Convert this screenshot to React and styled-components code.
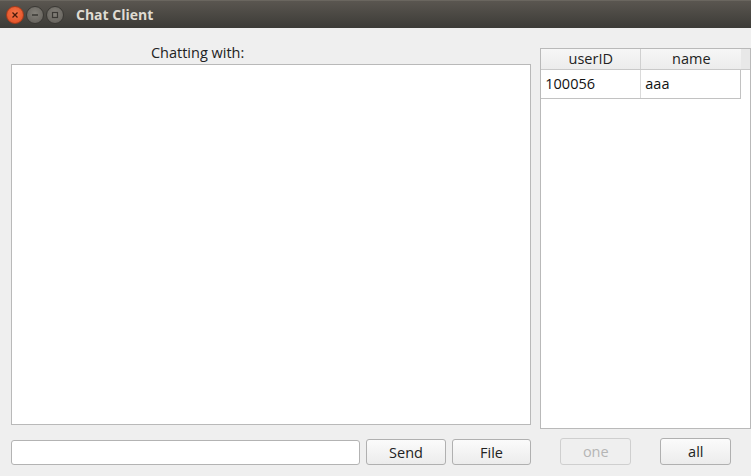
import styled, { createGlobalStyle } from "styled-components";

const Global = createGlobalStyle`
  html, body {
    margin: 0;
    padding: 0;
    background: #efefef;
  }
  * {
    box-sizing: border-box;
  }
`;

const Window = styled.div`
  width: 751px;
  height: 476px;
  display: flex;
  flex-direction: column;
  background: #efefef;
  font-family: "Open Sans", "DejaVu Sans", sans-serif;
  font-size: 14.5px;
  color: #2e2e2e;
  overflow: hidden;
`;

const TitleBar = styled.div`
  height: 28px;
  flex: none;
  display: flex;
  align-items: center;
  padding-left: 6px;
  background: linear-gradient(#5a5650, #3c3b37);
  border-top: 1px solid #6a665f;
`;

const WinButton = styled.div`
  width: 18px;
  height: 18px;
  margin-right: 2px;
  border-radius: 50%;
  display: flex;
  align-items: center;
  justify-content: center;
  background: ${(p) =>
    p.close
      ? "radial-gradient(circle at 50% 40%, #f4764a, #e0491f)"
      : "radial-gradient(circle at 50% 40%, #838079, #5f5c57)"};
  border: 1px solid ${(p) => (p.close ? "#a63b1b" : "#3a3834")};
`;

const Title = styled.div`
  margin-left: 10px;
  color: #dfdbd2;
  font-weight: bold;
  font-size: 14px;
`;

const Body = styled.div`
  flex: 1;
  display: flex;
  padding: 20px 0 11px 11px;
`;

const LeftCol = styled.div`
  width: 521px;
  display: flex;
  flex-direction: column;
`;

const ChatLabel = styled.div`
  height: 16px;
  text-align: center;
  line-height: 10px;
  padding-right: 147px;
  color: #222;
`;

const ChatBox = styled.div`
  height: 361px;
  background: #fff;
  border: 1px solid #b9b9b9;
`;

const InputRow = styled.div`
  display: flex;
  align-items: center;
  margin-top: 14px;
  gap: 6px;
`;

const TextInput = styled.input`
  width: 349px;
  height: 25px;
  border: 1px solid #b3b3b3;
  border-radius: 3px;
  background: #fff;
  outline: none;
  font: inherit;
`;

const Button = styled.button`
  width: ${(p) => p.w || 80}px;
  height: ${(p) => p.h || 26}px;
  padding: 0;
  border: 1px solid ${(p) => (p.disabled ? "#cfcfcf" : "#b0b0b0")};
  border-radius: 3px;
  background: ${(p) =>
    p.disabled ? "#efefef" : "linear-gradient(#fbfbfb, #ececec)"};
  color: ${(p) => (p.disabled ? "#b5b5b5" : "#222")};
  font-family: inherit;
  font-size: 14.5px;
`;

const RightCol = styled.div`
  width: 211px;
  margin-left: 9px;
  display: flex;
  flex-direction: column;
`;

const Table = styled.div`
  height: 381px;
  background: #fff;
  border: 1px solid #b9b9b9;
  display: flex;
  flex-direction: column;
`;

const HeaderRow = styled.div`
  display: flex;
  height: 21px;
  background: linear-gradient(#f6f6f6, #ececec);
  border-bottom: 1px solid #c9c9c9;
`;

const HeadCell = styled.div`
  width: ${(p) => p.w}px;
  text-align: center;
  line-height: 20px;
  border-right: ${(p) => (p.divider ? "1px solid #d0d0d0" : "none")};
  color: #222;
  &:last-child {
    flex: 1;
    background: #e8e8e8;
  }
`;

const Row = styled.div`
  display: flex;
  width: 200px;
  height: 29px;
  border-bottom: 1px solid #c2c2c2;
  border-right: 1px solid #c2c2c2;
`;

const Cell = styled.div`
  width: ${(p) => p.w}px;
  padding-left: 4px;
  line-height: 28px;
  color: #111;
  border-right: ${(p) => (p.last ? "none" : "1px solid #dadada")};
`;

const ButtonRow = styled.div`
  display: flex;
  margin-top: 9px;
  padding-left: 20px;
  gap: 29px;
`;

export default function App() {
  return (
    <Window>
      <Global />
      <TitleBar>
        <WinButton close>
          <svg width="8" height="8" viewBox="0 0 8 8">
            <path d="M1.5 1.5 L6.5 6.5 M6.5 1.5 L1.5 6.5" stroke="#4a1a0a" strokeWidth="1.3" />
          </svg>
        </WinButton>
        <WinButton>
          <svg width="8" height="8" viewBox="0 0 8 8">
            <path d="M1 4 H7" stroke="#3a3834" strokeWidth="1.5" />
          </svg>
        </WinButton>
        <WinButton>
          <svg width="8" height="8" viewBox="0 0 8 8">
            <rect x="1.5" y="1.5" width="5" height="5" fill="none" stroke="#3a3834" strokeWidth="1.2" />
          </svg>
        </WinButton>
        <Title>Chat Client</Title>
      </TitleBar>
      <Body>
        <LeftCol>
          <ChatLabel>Chatting with:</ChatLabel>
          <ChatBox />
          <InputRow>
            <TextInput />
            <Button w={80}>Send</Button>
            <Button w={79}>File</Button>
          </InputRow>
        </LeftCol>
        <RightCol>
          <Table>
            <HeaderRow>
              <HeadCell w={100} divider>userID</HeadCell>
              <HeadCell w={100}>name</HeadCell>
              <HeadCell />
            </HeaderRow>
            <Row>
              <Cell w={100}>100056</Cell>
              <Cell w={99} last>aaa</Cell>
            </Row>
          </Table>
          <ButtonRow>
            <Button w={71} h={27} disabled>one</Button>
            <Button w={71} h={27}>all</Button>
          </ButtonRow>
        </RightCol>
      </Body>
    </Window>
  );
}
